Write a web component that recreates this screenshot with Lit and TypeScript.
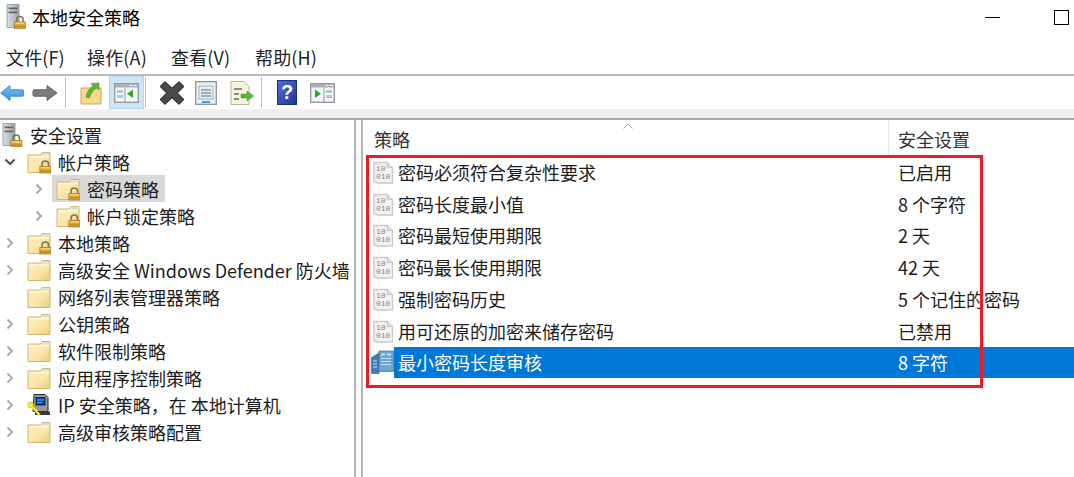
import { LitElement, html, css, svg } from "lit";
import { customElement } from "lit/decorators.js";

const lock = (x: number, y: number) => svg`
  <path d="M${x + 2.6} ${y + 5.5}V${y + 3}a3.2 3 0 0 1 6.4 0V${y + 5.5}" fill="none" stroke="#7d7248" stroke-width="1.5"/>
  <rect x="${x + .4}" y="${y + 5.4}" width="11" height="6.6" fill="#dca733" stroke="#9c7420" stroke-width=".7"/>
  <rect x="${x + 1}" y="${y + 6}" width="9.8" height="1.6" fill="#f3d075"/>
  <rect x="${x + 1}" y="${y + 9.4}" width="9.8" height="1.2" fill="#b98920"/>`;

const folderShape = svg`
  <defs><linearGradient id="fg" x1="0" y1="0" x2="1" y2="1">
    <stop offset="0" stop-color="#fdf1cb"/><stop offset=".6" stop-color="#fae4a6"/><stop offset="1" stop-color="#eecb7c"/>
  </linearGradient></defs>
  <path d="M1 5V22.500h22V2.500H15L13.500 5Z" fill="url(#fg)" stroke="#d3b672" stroke-width="1"/>
  <path d="M2 6h20v1.500H2z" fill="#fff6d8"/>
  <path d="M15.500 3h7v2h-8z" fill="#cfe3ee"/>`;

const folder = html`<svg class="ticon" width="24" height="24" viewBox="0 0 24 24">${folderShape}</svg>`;
const lockFolder = html`<svg class="ticon" width="24" height="24" viewBox="0 0 24 24">${folderShape}${lock(12.500, 11)}</svg>`;
const serverBody = (w: number, h: number) => svg`
  <defs><linearGradient id="sg" x1="0" y1="0" x2="1" y2="0"><stop offset="0" stop-color="#dfe2e6"/><stop offset="1" stop-color="#9da3ab"/></linearGradient></defs>
  <path d="M1 .500h${w}v${h}H1z" fill="url(#sg)" stroke="#8a8f98" stroke-width=".8"/>
  <path d="M2.500 3.500h${w - 3}v1.800h-${w - 3}zM2.500 7.500h${w - 3}v1.800h-${w - 3}z" fill="#5f6670"/>`;
const server = html`<svg class="ticon" width="24" height="24" viewBox="0 0 24 24">${serverBody(12, 22)}${lock(8.500, 12)}</svg>`;
const ipIcon = html`<svg class="ticon" width="24" height="24" viewBox="0 0 24 24">
  <path d="M7 1.500h11l3 3v14H6z" fill="#9a9a9a" stroke="#262626" stroke-width="1"/>
  <rect x="9" y="4.500" width="9" height="7.500" fill="#1a3fc0" stroke="#111" stroke-width=".8"/>
  <path d="M10 7h7M10 9.500h5" stroke="#35c0d8" stroke-width="1"/>
  <path d="M8 18.500h15v3.500H8z" fill="#3a3a3a"/>
  <circle cx="3.800" cy="12" r="3" fill="#f2ec30" stroke="#b5a818" stroke-width=".6"/>
  <path d="M5.500 14l7 8" stroke="#f2ec30" stroke-width="2.600"/></svg>`;
const docIcon = html`<svg class="licon" width="21" height="24" viewBox="0 0 21 24">
  <path d="M1 2.500h13l5.500 5v15.500H4.500L1 21.500z" fill="#f2f2f2" stroke="#cacaca" stroke-width="1.400"/>
  <path d="M14 2.500v5h5.500" fill="#dcdcdc" stroke="#cacaca"/>
  <text x="3" y="10.500" class="bin">10</text><text x="3" y="19" class="bin">010</text></svg>`;
const auditIcon = html`<svg class="aicon" width="23" height="24" viewBox="0 0 23 24">
  <path d="M.500 7.500L8 3v20.500H.500z" fill="#3f7cb8" stroke="#2c5f92" stroke-width=".6"/>
  <path d="M8 1h14.500v20.500H8z" fill="#6ea6d6" stroke="#3a6d9d" stroke-width=".7"/>
  <path d="M10 3.500h4v2h-4zM16 3.500h4v2h-4zM10 8h10v1H10zM10 11h10v1H10zM10 14h10v1H10z" fill="#c4dff2"/>
  <path d="M2 10.500h4v1H2zM2 13.500h4v1H2zM2 16.500h4v1H2z" fill="#c4dff2"/>
  <rect x="19.500" y="18" width="2" height="2" fill="#5ec04a"/></svg>`;

const windowIcon = (arrow: any) => svg`
  <rect x=".700" y=".700" width="23.600" height="18.600" fill="#f4f6f8" stroke="#91959c" stroke-width="1.300"/>
  <rect x="1" y="1" width="23" height="3.500" fill="#aeb2b8"/>
  <path d="M16 2.500h2.500M20 2.500h2.500" stroke="#fff" stroke-width="1"/>${arrow}`;

@customElement("app-root")
export class AppRoot extends LitElement {
  static styles = css`
    :host { display: block; width: 1074px; height: 477px; position: relative; overflow: hidden; background: #fff;
      font: 18px/24px "Noto Sans CJK SC", "Noto Sans", sans-serif; color: #1c1c1c; }
    .title { height: 37px; display: flex; align-items: center; padding: 0 0 4px 6px; gap: 6px; box-sizing: border-box; }
    .title svg { flex: none; }
    .title .name { flex: 1; color: #000; }
    .wbtn { flex: none; width: 15px; height: 15px; box-sizing: border-box; }
    .min { border-bottom: 1px solid #000; height: 9px; margin-right: 48px; transform: translateY(-3px); }
    .max { border: 1px solid #000; margin-right: 5px; transform: translateY(1px); }
    .menu { height: 39px; display: grid; grid-template-columns: 81px 84px 84px auto; align-items: center; padding: 2px 0 0 6px; border-bottom: 2px solid #b9b9b9; box-sizing: border-box; color: #222; }
    .menu span { letter-spacing: .15px; }
    .tools { height: 33px; display: flex; align-items: center; box-sizing: border-box; }
    .tools svg { flex: none; }
    .on { width: 35px; height: 33px; display: flex; align-items: center; justify-content: center; flex: none; box-sizing: border-box; background: #cfe5f7; border: 1px solid #b6d7f2; margin-left: 5px; }
    .sep { width: 1px; height: 31px; background: #c2c2c2; flex: none; }
    .s1 { margin-left: 7px; } .s2 { margin-left: 1px; } .s3 { margin-left: 7px; }
    .fwd { margin-left: 8px; } .fold { margin-left: 12px; } .cross { margin-left: 12px; }
    .page { margin-left: 9px; } .pagego { margin-left: 13px; } .help { margin-left: 15px; } .win { margin-left: 13px; }
    .strip { height: 11px; box-sizing: border-box; background: #f0f0f0; border-bottom: 2px solid #a6a9ac; }
    .panes { display: flex; height: 357px; }
    .left { width: 356px; flex: none; box-sizing: border-box; border-right: 2px solid #b4b4b4; padding-top: 1px; }
    .gap { width: 5px; flex: none; background: #f9f9f9; border-right: 2px solid #b4b4b4; }
    .row { height: 27px; display: flex; align-items: center; white-space: nowrap; }
    .chev { width: 14px; height: 14px; flex: none; margin-right: 10px; margin-left: 3px; }
    .nochev { width: 27px; flex: none; }
    .ticon { flex: none; margin-right: 7px; }
    .l2 { padding-left: 29px; }
    .l2 .chev { margin-right: 6px; }
    .node { display: flex; align-items: center; height: 100%; padding: 0 6px 0 4px; }
    .sel { background: #d9d9d9; }
    .root { padding-left: 2px; }
    .root .ticon { margin-right: 4px; }
    .right { flex: 1; min-width: 0; }
    .head { height: 36px; display: flex; color: #333; position: relative; }
    .h1 { width: 526px; box-sizing: border-box; padding: 7px 0 0 11px; border-right: 1px solid #e6e6e6; }
    .h2 { padding: 7px 0 0 9px; }
    .sort { position: absolute; left: 260px; top: 3px; }
    .item { height: 31.75px; display: flex; align-items: center; white-space: nowrap; }
    .licon { flex: none; margin-left: 10px; }
    .aicon { flex: none; margin-left: 8px; }
    .cell1 { width: 504px; box-sizing: border-box; flex: none; padding-left: 4px; height: 100%; display: flex; align-items: center; }
    .cell2 { flex: 1; height: 100%; display: flex; align-items: center; }
    .active .cell1, .active .cell2 { background: #0078d7; color: #fff; }
    .bin { font: 8px "Liberation Mono", monospace; fill: #868686; }
    .redbox { position: absolute; left: 366px; top: 155px; width: 617px; height: 233px; box-sizing: border-box; border: 3px solid #ed1c24; pointer-events: none; }
  `;

  render() {
    const chevR = html`<svg class="chev" viewBox="0 0 14 14"><path d="M4.500 2.500L9 7l-4.500 4.500" fill="none" stroke="#a6a6a6" stroke-width="1.800"/></svg>`;
    const chevD = html`<svg class="chev" viewBox="0 0 14 14"><path d="M2.500 4.500L7 9l4.500-4.500" fill="none" stroke="#444" stroke-width="1.800"/></svg>`;
    const items: [string, string][] = [
      ["密码必须符合复杂性要求", "已启用"], ["密码长度最小值", "8 个字符"], ["密码最短使用期限", "2 天"],
      ["密码最长使用期限", "42 天"], ["强制密码历史", "5 个记住的密码"], ["用可还原的加密来储存密码", "已禁用"],
    ];
    return html`
      <div class="title">
        <svg width="20" height="25" viewBox="0 0 20 25">
          ${serverBody(12, 23)}${lock(8, 12.500)}
        </svg>
        <span class="name">本地安全策略</span>
        <span class="wbtn min"></span><span class="wbtn max"></span>
      </div>
      <div class="menu"><span>文件(F)</span><span>操作(A)</span><span>查看(V)</span><span>帮助(H)</span></div>
      <div class="tools">
        <svg width="24" height="20" viewBox="0 0 24 20"><defs><linearGradient id="bk" x1="0" y1="0" x2="0" y2="1"><stop offset="0" stop-color="#7cc4f2"/><stop offset="1" stop-color="#2d8fdc"/></linearGradient></defs><path d="M.800 10L10 2.500v4.300h12.500c.5 0 1 .5 1 1v4.400c0 .5-.5 1-1 1H10v4.300z" fill="url(#bk)" stroke="#3a8fd0" stroke-linejoin="round"/></svg>
        <svg class="fwd" width="26" height="20" viewBox="0 0 26 20"><path d="M25 10L15 2.500v4.300H2c-.5 0-1 .5-1 1v4.400c0 .5.500 1 1 1h13v4.300z" fill="#7c7c7c" stroke="#666" stroke-linejoin="round"/></svg>
        <span class="sep s1"></span>
        <svg class="fold" width="26" height="26" viewBox="0 0 26 26">
          <path d="M3 8h20v16H3z" fill="#f6d98c" stroke="#c9a85c"/><path d="M8 17c1-6 4-9 7-11l-2-2.500 8-.5v7l-2-2c-3 1-6 5-7.500 10z" fill="#5cb531" stroke="#3f8a1e" stroke-width=".5"/></svg>
        <span class="on"><svg width="25" height="20" viewBox="0 0 25 20">${windowIcon(svg`<path d="M3 7h6v3H3zM3 12h6v3H3z" fill="#b5c6d8"/><path d="M19 6.500v8.500l-6-4.250z" fill="#2fa81e"/><path d="M11 4.500v15" stroke="#91959c"/>`)}</svg></span>
        <span class="sep s2"></span>
        <svg class="cross" width="28" height="26" viewBox="0 0 28 26"><path d="M2.500 6.500l4.500-4.500 7 6.500 7-6.500 4.500 4.500-6.500 6.500 6.500 6.500-4.500 4.500-7-6.500-7 6.500-4.500-4.500 6.500-6.500z" fill="#4a4a4a" stroke="#3a3a3a" stroke-linejoin="round" stroke-width="1.500"/></svg>
        <svg class="page" width="22" height="24" viewBox="0 0 22 24"><rect x=".700" y=".700" width="20.600" height="22.600" fill="#eef1f3" stroke="#8d9198" stroke-width="1.300"/><rect x="4" y="5" width="14" height="13" fill="#e3eef7" stroke="#a3b3c2"/><path d="M6 9h10M6 12h10M6 15h10" stroke="#5c6d80"/><path d="M7 21h8" stroke="#3ea2dc" stroke-width="2"/></svg>
        <svg class="pagego" width="24" height="24" viewBox="0 0 24 24"><path d="M1 .500h13l5 5v18H1z" fill="#f8f5df" stroke="#b7b39a"/><path d="M4 8h8M4 13h5M4 18h5" stroke="#666" stroke-width="1.400"/><path d="M11 13h6v-3l6.500 5-6.500 5v-3h-6z" fill="#58b935" stroke="#3d8c22" stroke-width=".5"/></svg>
        <span class="sep s3"></span>
        <svg class="help" width="20" height="25" viewBox="0 0 20 25"><defs><linearGradient id="hp" x1="0" y1="0" x2="1" y2="1"><stop offset="0" stop-color="#4f6fd8"/><stop offset="1" stop-color="#1f3594"/></linearGradient></defs><rect x=".500" y=".500" width="19" height="24" fill="url(#hp)" stroke="#1b2f7c"/><text x="10" y="19" text-anchor="middle" fill="#fff" font-family="Liberation Sans" font-weight="700" font-size="20">?</text></svg>
        <svg class="win" width="25" height="20" viewBox="0 0 25 20">${windowIcon(svg`<path d="M5 6.500v8.500l6-4.250z" fill="#2fa81e"/><path d="M16 7h6v3h-6zM16 12h6v3h-6z" fill="#b5c6d8"/><path d="M14 4.500v15" stroke="#91959c"/>`)}</svg>
      </div>
      <div class="strip"></div>
      <div class="panes">
        <div class="left">
          <div class="row root">${server}<span>安全设置</span></div>
          <div class="row">${chevD}${lockFolder}<span>帐户策略</span></div>
          <div class="row l2">${chevR}<span class="node sel">${lockFolder}<span>密码策略</span></span></div>
          <div class="row l2">${chevR}<span class="node">${lockFolder}<span>帐户锁定策略</span></span></div>
          <div class="row">${chevR}${lockFolder}<span>本地策略</span></div>
          <div class="row">${chevR}${folder}<span>高级安全 Windows Defender 防火墙</span></div>
          <div class="row"><span class="nochev"></span>${folder}<span>网络列表管理器策略</span></div>
          <div class="row">${chevR}${folder}<span>公钥策略</span></div>
          <div class="row">${chevR}${folder}<span>软件限制策略</span></div>
          <div class="row">${chevR}${folder}<span>应用程序控制策略</span></div>
          <div class="row">${chevR}${ipIcon}<span>IP 安全策略，在 本地计算机</span></div>
          <div class="row">${chevR}${folder}<span>高级审核策略配置</span></div>
        </div>
        <div class="gap"></div>
        <div class="right">
          <div class="head">
            <svg class="sort" width="10" height="6" viewBox="0 0 10 6"><path d="M.500 5.500L5 1l4.500 4.500" fill="none" stroke="#b0b0b0"/></svg>
            <div class="h1">策略</div><div class="h2">安全设置</div>
          </div>
          ${items.map(([a, b]) => html`<div class="item">${docIcon}<span class="cell1">${a}</span><span class="cell2">${b}</span></div>`)}
          <div class="item active">${auditIcon}<span class="cell1">最小密码长度审核</span><span class="cell2">8 字符</span></div>
        </div>
      </div>
      <div class="redbox"></div>
    `;
  }
}
